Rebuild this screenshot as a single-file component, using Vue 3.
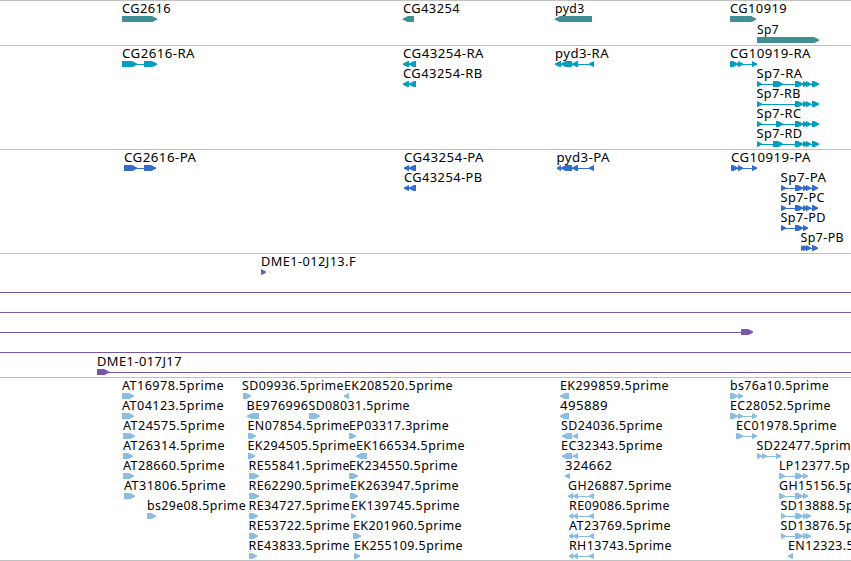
<script setup>
import { computed } from 'vue'

const WIDTH = 851

// feature: [row, x, label, label width, strand, exons]
const tracks = [
  {
    name: 'gene', height: 44, pitch: 21,
    features: [
      [0, 122, 'CG2616', 49, 1, [[122, 157]]],
      [0, 403, 'CG43254', 57, -1, [[403, 414]]],
      [0, 555, 'pyd3', 29.5, -1, [[555, 592]]],
      [0, 730, 'CG10919', 57, 1, [[730, 756]]],
      [1, 757, 'Sp7', 22, 1, [[757, 819]]]
    ]
  },
  {
    name: 'transcript', height: 103, pitch: 20,
    features: [
      [0, 122, 'CG2616-RA', 73, 1, [[122, 137], [144, 157]]],
      [0, 403, 'CG43254-RA', 81, -1, [[403, 409], [409, 416]]],
      [1, 403, 'CG43254-RB', 79.5, -1, [[403, 409], [409, 416]]],
      [0, 555, 'pyd3-RA', 54, -1, [[555, 561], [561, 572], [572, 578], [589, 594]]],
      [0, 730, 'CG10919-RA', 81, 1, [[730, 738], [738, 743], [752, 757]]],
      [1, 756.5, 'Sp7-RA', 46, 1, [[757, 762], [773, 783], [795, 803], [803, 808], [806, 811], [812, 819]]],
      [2, 756.5, 'Sp7-RB', 44.5, 1, [[757, 762], [795, 803], [803, 808], [806, 811], [812, 819]]],
      [3, 756.5, 'Sp7-RC', 45, 1, [[757, 762], [776, 783], [795, 803], [803, 808], [806, 811], [812, 819]]],
      [4, 756.5, 'Sp7-RD', 46, 1, [[757, 762], [773, 783], [795, 803], [803, 808], [806, 811], [812, 819]]]
    ]
  },
  {
    name: 'protein', height: 103, pitch: 20,
    features: [
      [0, 124, 'CG2616-PA', 72.5, 1, [[124, 137], [144, 156]]],
      [0, 404, 'CG43254-PA', 80, -1, [[404, 409], [409, 416]]],
      [1, 404, 'CG43254-PB', 78.5, -1, [[404, 409], [409, 416]]],
      [0, 556.5, 'pyd3-PA', 53.5, -1, [[557, 561], [561, 572], [572, 578], [589, 594]]],
      [0, 731, 'CG10919-PA', 80, 1, [[731, 738], [738, 743], [752, 757]]],
      [1, 780.5, 'Sp7-PA', 46, 1, [[781, 786], [795, 803], [803, 808], [806, 811], [812, 818]]],
      [2, 780.5, 'Sp7-PC', 44.5, 1, [[781, 786], [795, 803], [803, 808], [806, 811], [812, 818]]],
      [3, 780.5, 'Sp7-PD', 45.5, 1, [[781, 786], [795, 803], [803, 808]]],
      [4, 800.5, 'Sp7-PB', 43.5, 1, [[801, 804], [803, 808], [806, 811], [812, 818]]]
    ]
  },
  {
    name: 'bac', height: 123, pitch: 20,
    features: [
      [0, 261, 'DME1-012J13.F', 95, 1, [[261, 266]]],
      [1, 0, '', 0, 1, [], [0, WIDTH]],
      [2, 0, '', 0, 1, [], [0, WIDTH]],
      [3, 0, '', 0, 1, [[741, 753]], [0, 741]],
      [4, 0, '', 0, 1, [], [0, WIDTH]],
      [5, 97, 'DME1-017J17', 85, 1, [[97, 109]], [97, WIDTH]]
    ]
  },
  {
    name: 'est', height: 182, pitch: 20,
    features: [
      [0, 122, 'AT16978.5prime', 102, 1, [[122, 134]]],
      [1, 122, 'AT04123.5prime', 102, 1, [[122, 134]]],
      [2, 123, 'AT24575.5prime', 102, 1, [[123, 135]]],
      [3, 123, 'AT26314.5prime', 102, 1, [[123, 133]]],
      [4, 123, 'AT28660.5prime', 102, 1, [[123, 134]]],
      [5, 124, 'AT31806.5prime', 102, 1, [[124, 135]]],
      [6, 147, 'bs29e08.5prime', 99, 1, [[147, 156]]],

      [0, 242, 'SD09936.5prime', 102, 1, [[243, 251]]],
      [1, 246.5, 'BE976996', 62, -1, [[247, 259]]],
      [2, 247.5, 'EN07854.5prime', 102.5, 1, [[248, 256]]],
      [3, 247.5, 'EK294505.5prime', 109, 1, [[248, 255]]],
      [4, 248.5, 'RE55841.5prime', 101.5, 1, [[249, 259]]],
      [5, 248.5, 'RE62290.5prime', 101.5, 1, [[249, 259]]],
      [6, 248.5, 'RE34727.5prime', 101.5, 1, [[249, 258]]],
      [7, 248.5, 'RE53722.5prime', 101.5, 1, [[249, 258]]],
      [8, 248.5, 'RE43833.5prime', 101.5, 1, [[249, 257]]],

      [0, 344, 'EK208520.5prime', 109, -1, [[344, 349]]],
      [1, 308.5, 'SD08031.5prime', 101.5, 1, [[309, 320]]],
      [2, 349, 'EP03317.3prime', 100, 1, [[349, 356]]],
      [3, 356, 'EK166534.5prime', 109, -1, [[356, 367]]],
      [4, 349, 'EK234550.5prime', 109, 1, [[349, 358]]],
      [5, 350, 'EK263947.5prime', 109, 1, [[350, 358]]],
      [6, 351, 'EK139745.5prime', 109, 1, [[351, 356]]],
      [7, 353, 'EK201960.5prime', 109, 1, [[353, 361]]],
      [8, 354, 'EK255109.5prime', 109, 1, [[354, 360]]],

      [0, 560, 'EK299859.5prime', 109, -1, [[560, 569]]],
      [1, 560, '495889', 48, -1, [[560, 569]]],
      [2, 561, 'SD24036.5prime', 102, -1, [[562, 572], [573, 578]]],
      [3, 561, 'EC32343.5prime', 102, -1, [[562, 572], [573, 578]]],
      [4, 565, '324662', 47.5, -1, [[565, 570]]],
      [5, 568, 'GH26887.5prime', 104, -1, [[568, 573], [573, 578], [589, 594]]],
      [6, 569, 'RE09086.5prime', 101, -1, [[569, 573], [573, 578], [589, 594]]],
      [7, 569, 'AT23769.5prime', 102, -1, [[569, 573], [573, 578], [589, 594]]],
      [8, 569, 'RH13743.5prime', 103, -1, [[569, 573], [573, 578], [589, 594]]],

      [0, 730, 'bs76a10.5prime', 99, 1, [[730, 738], [738, 743]]],
      [1, 730, 'EC28052.5prime', 101, 1, [[730, 738], [738, 743], [752, 757]]],
      [2, 736, 'EC01978.5prime', 101, 1, [[736, 743], [752, 757]]],
      [3, 756.5, 'SD22477.5prime', 102, 1, [[757, 762], [762, 767], [776, 781]]],
      [4, 779, 'LP12377.5prime', 99.5, 1, [[779, 785], [795, 803], [803, 808]]],
      [5, 779, 'GH15156.5prime', 104, 1, [[779, 785], [795, 803], [803, 808]]],
      [6, 780.5, 'SD13888.5prime', 102, 1, [[781, 786], [795, 803], [803, 808], [806, 811]]],
      [7, 780.5, 'SD13876.5prime', 102, 1, [[781, 786], [795, 803], [803, 808], [806, 811]]],
      [8, 788, 'EN12323.5prime', 102.5, -1, [[788, 793]]]
    ]
  }
]

// box with a pointed end, the strand decides which side
const exonPoints = ([a, b], strand, y) => {
  const head = strand > 0 ? b : a
  const tail = strand > 0 ? a : b
  const tip = Math.min(5, b - a) * strand
  return [
    [tail, y],
    [head - tip, y],
    [head - tip * 0.4, y + 1.5],
    [head, y + 2.6],
    [head, y + 3.8],
    [head - tip * 0.4, y + 4.8],
    [head - tip * 0.9, y + 6],
    [tail, y + 6]
  ].map(p => p.join(',')).join(' ')
}

const rows = computed(() => tracks.map(track => ({
  ...track,
  features: track.features.map(([row, x, label, width, strand, exons, line]) => {
    const top = row * track.pitch
    const span = line || [exons[0][0], exons[exons.length - 1][1]]
    return {
      x, label, width, span,
      baseline: top + 12,
      lineY: top + 18,
      exons: exons.map(e => exonPoints(e, strand, top + 15))
    }
  })
})))
</script>

<template>
  <div class="browser">
    <section v-for="track in rows" :key="track.name" class="track" :class="track.name">
      <svg class="lane" :width="WIDTH" :height="track.height">
        <g v-for="(f, i) in track.features" :key="i">
          <rect :x="f.span[0]" :y="f.lineY" :width="f.span[1] - f.span[0]" height="1" />
          <polygon v-for="(points, n) in f.exons" :key="n" :points="points" />
          <text
            v-if="f.label"
            :x="f.x"
            :y="f.baseline"
            :textLength="f.width"
            lengthAdjust="spacingAndGlyphs"
          >{{ f.label }}</text>
        </g>
      </svg>
    </section>
  </div>
</template>

<style>
body {
  margin: 0;
  background: #fff;
}
</style>

<style scoped>
.browser {
  display: flex;
  flex-direction: column;
  width: 851px;
  border-bottom: 1px solid #c0c0c0;
  overflow: hidden;
}

.track {
  border-top: 1px solid #c0c0c0;
}

.lane {
  display: block;
}

.lane text {
  font-family: "Noto Sans", "Open Sans", sans-serif;
  font-size: 12px;
  letter-spacing: 0.4px;
  fill: #000;
}

.gene {
  fill: #408f94;
}

.transcript {
  fill: #009fbf;
}

.protein {
  fill: #336ccc;
}

.bac {
  fill: #7657a8;
}

.est {
  fill: #8abddf;
}
</style>
